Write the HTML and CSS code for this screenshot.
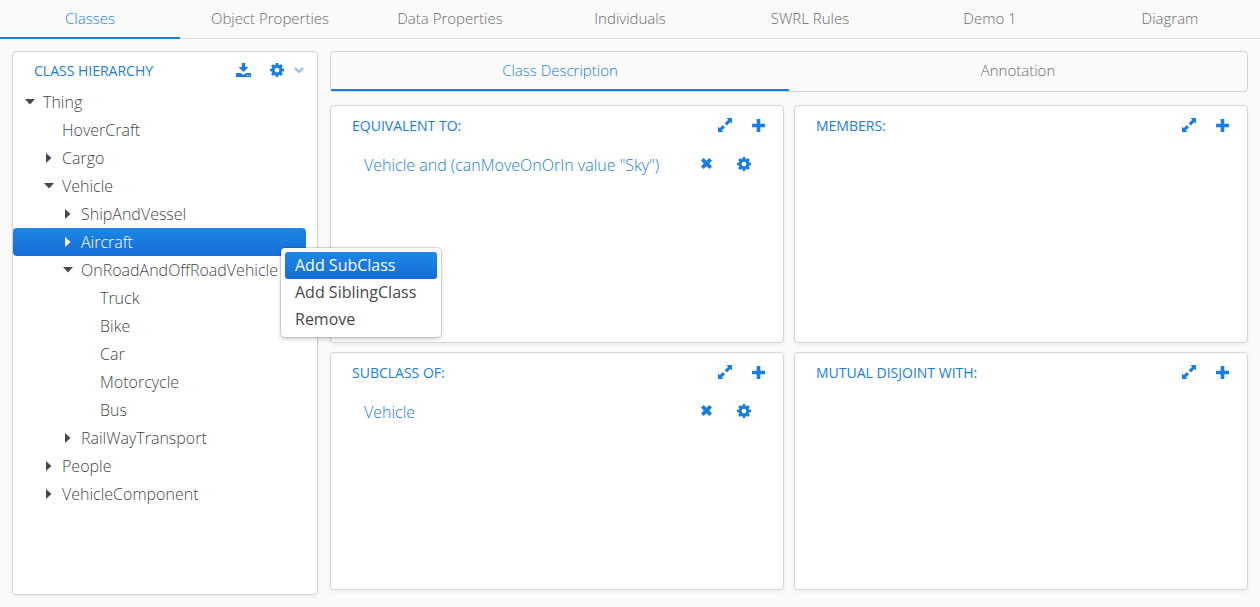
FILE: index.html
```html
<!DOCTYPE html>
<html lang="en">
<head>
<meta charset="utf-8">
<meta name="viewport" content="width=device-width, initial-scale=1">
<title>Ontology Editor</title>
<link rel="stylesheet" href="styles.css">
</head>
<body>
<svg class="sprite" aria-hidden="true">
  <symbol id="i-cog" viewBox="0 0 1536 1536"><path d="M1024 768q0-106-75-181t-181-75-181 75-75 181 75 181 181 75 181-75 75-181zm512-109v222q0 12-8 23t-20 13l-185 28q-19 54-39 91 35 50 107 138 10 12 10 25t-9 23q-27 37-99 108t-94 71q-12 0-26-9l-138-108q-44 23-91 38-16 136-29 186-7 28-36 28h-222q-14 0-24.500-8.500t-11.500-21.500l-28-184q-49-16-90-37l-141 107q-10 9-25 9-14 0-25-11-126-114-165-168-7-10-7-23 0-12 8-23 15-21 51-66.500t54-70.500q-27-50-41-99l-183-27q-13-2-21-12.500t-8-23.500v-222q0-12 8-23t19-13l186-28q14-46 39-92-40-57-107-138-10-12-10-24 0-10 9-23 26-36 98.500-107.500t94.500-71.500q13 0 26 10l138 107q44-23 91-38 16-136 29-186 7-28 36-28h222q14 0 24.500 8.500t11.500 21.500l28 184q49 16 90 37l142-107q9-9 24-9 13 0 25 10 129 119 165 170 7 8 7 22 0 12-8 23-15 21-51 66.500t-54 70.500q26 50 41 98l183 28q13 2 21 12.500t8 23.500z"/></symbol>
  <symbol id="i-download" viewBox="0 0 15 14"><path d="M5.800 0h3.400v4h3.300L7.500 9 2.500 4h3.300z"/><path fill-rule="evenodd" d="M0 10h4.700L7.500 12l2.800-2H15v4H0zM11 12v1h1v-1zM13 12v1h1v-1z"/></symbol>
  <symbol id="i-chevron" viewBox="0 0 10 6"><path d="M1 1l4 4 4-4" fill="none" stroke="currentColor" stroke-width="2"/></symbol>
  <symbol id="i-expand" viewBox="0 0 14 14"><path d="M8.500 0H14v5.500l-1.600-1.600-3.500 3.500-2.200-2.200 3.500-3.500zM0 8.500V14h5.500l-1.600-1.600 3.100-3.100-2.200-2.200-3.200 3.100z"/></symbol>
  <symbol id="i-plus" viewBox="0 0 13 13"><path d="M4.700 0h3.600v4.700H13v3.600H8.300V13H4.700V8.300H0V4.700h4.700z"/></symbol>
  <symbol id="i-close" viewBox="0 0 11 11"><path d="M2.600 0L5.500 2.700 8.400 0 11 2.600 8.300 5.500 11 8.400 8.400 11 5.500 8.300 2.600 11 0 8.400l2.700-2.900L0 2.600z"/></symbol>
  <symbol id="i-down" viewBox="0 0 10 10"><path d="M0 2h10L5 7.500z"/></symbol>
  <symbol id="i-right" viewBox="0 0 10 10"><path d="M2 0l5.500 5L2 10z"/></symbol>
</svg>

<nav class="tabs main-tabs" role="tablist" aria-label="Sections">
  <button class="tab active" role="tab" aria-selected="true">Classes</button>
  <button class="tab" role="tab">Object Properties</button>
  <button class="tab" role="tab">Data Properties</button>
  <button class="tab" role="tab">Individuals</button>
  <button class="tab" role="tab">SWRL Rules</button>
  <button class="tab" role="tab">Demo 1</button>
  <button class="tab" role="tab">Diagram</button>
</nav>

<main class="workspace">
  <section class="panel hierarchy">
    <header class="panel-head">
      <h2 class="title">CLASS HIERARCHY</h2>
      <div class="tools">
        <button class="icon-btn" aria-label="Download"><svg class="icon icon-download"><use href="#i-download"/></svg></button>
        <button class="icon-btn settings" aria-label="Settings"><svg class="icon icon-cog"><use href="#i-cog"/></svg><svg class="icon icon-chevron"><use href="#i-chevron"/></svg></button>
      </div>
    </header>
    <ul class="tree" role="tree">
      <li class="node level-1" role="treeitem" aria-expanded="true"><button class="node-btn"><svg class="arrow"><use href="#i-down"/></svg>Thing</button></li>
      <li class="node level-2" role="treeitem"><button class="node-btn"><span class="arrow"></span>HoverCraft</button></li>
      <li class="node level-2" role="treeitem" aria-expanded="false"><button class="node-btn"><svg class="arrow"><use href="#i-right"/></svg>Cargo</button></li>
      <li class="node level-2" role="treeitem" aria-expanded="true"><button class="node-btn"><svg class="arrow"><use href="#i-down"/></svg>Vehicle</button></li>
      <li class="node level-3" role="treeitem" aria-expanded="false"><button class="node-btn"><svg class="arrow"><use href="#i-right"/></svg>ShipAndVessel</button></li>
      <li class="node level-3 selected" role="treeitem" aria-expanded="false" aria-selected="true">
        <button class="node-btn"><svg class="arrow"><use href="#i-right"/></svg>Aircraft</button>
        <div class="menu" role="menu">
          <button class="menu-item active" role="menuitem">Add SubClass</button>
          <button class="menu-item" role="menuitem">Add SiblingClass</button>
          <button class="menu-item" role="menuitem">Remove</button>
        </div>
      </li>
      <li class="node level-3" role="treeitem" aria-expanded="true"><button class="node-btn"><svg class="arrow"><use href="#i-down"/></svg>OnRoadAndOffRoadVehicle</button></li>
      <li class="node level-4" role="treeitem"><button class="node-btn"><span class="arrow"></span>Truck</button></li>
      <li class="node level-4" role="treeitem"><button class="node-btn"><span class="arrow"></span>Bike</button></li>
      <li class="node level-4" role="treeitem"><button class="node-btn"><span class="arrow"></span>Car</button></li>
      <li class="node level-4" role="treeitem"><button class="node-btn"><span class="arrow"></span>Motorcycle</button></li>
      <li class="node level-4" role="treeitem"><button class="node-btn"><span class="arrow"></span>Bus</button></li>
      <li class="node level-3" role="treeitem" aria-expanded="false"><button class="node-btn"><svg class="arrow"><use href="#i-right"/></svg>RailWayTransport</button></li>
      <li class="node level-2" role="treeitem" aria-expanded="false"><button class="node-btn"><svg class="arrow"><use href="#i-right"/></svg>People</button></li>
      <li class="node level-2" role="treeitem" aria-expanded="false"><button class="node-btn"><svg class="arrow"><use href="#i-right"/></svg>VehicleComponent</button></li>
    </ul>
  </section>

  <div class="details">
    <div class="tabs detail-tabs" role="tablist" aria-label="Class details">
      <button class="tab active" role="tab" aria-selected="true">Class Description</button>
      <button class="tab" role="tab">Annotation</button>
    </div>
    <div class="cards">
      <section class="panel">
        <header class="card-head">
          <h2 class="title">EQUIVALENT TO:</h2>
          <div class="tools">
            <button class="icon-btn" aria-label="Expand"><svg class="icon icon-expand"><use href="#i-expand"/></svg></button>
            <button class="icon-btn" aria-label="Add"><svg class="icon icon-plus"><use href="#i-plus"/></svg></button>
          </div>
        </header>
        <div class="entry">
          <a class="entry-text" href="#">Vehicle and (canMoveOnOrIn value "Sky")</a>
          <div class="entry-tools">
            <button class="icon-btn" aria-label="Delete"><svg class="icon icon-close"><use href="#i-close"/></svg></button>
            <button class="icon-btn" aria-label="Edit"><svg class="icon icon-cog"><use href="#i-cog"/></svg></button>
          </div>
        </div>
      </section>
      <section class="panel">
        <header class="card-head">
          <h2 class="title">MEMBERS:</h2>
          <div class="tools">
            <button class="icon-btn" aria-label="Expand"><svg class="icon icon-expand"><use href="#i-expand"/></svg></button>
            <button class="icon-btn" aria-label="Add"><svg class="icon icon-plus"><use href="#i-plus"/></svg></button>
          </div>
        </header>
      </section>
      <section class="panel">
        <header class="card-head">
          <h2 class="title">SUBCLASS OF:</h2>
          <div class="tools">
            <button class="icon-btn" aria-label="Expand"><svg class="icon icon-expand"><use href="#i-expand"/></svg></button>
            <button class="icon-btn" aria-label="Add"><svg class="icon icon-plus"><use href="#i-plus"/></svg></button>
          </div>
        </header>
        <div class="entry">
          <a class="entry-text" href="#">Vehicle</a>
          <div class="entry-tools">
            <button class="icon-btn" aria-label="Delete"><svg class="icon icon-close"><use href="#i-close"/></svg></button>
            <button class="icon-btn" aria-label="Edit"><svg class="icon icon-cog"><use href="#i-cog"/></svg></button>
          </div>
        </div>
      </section>
      <section class="panel">
        <header class="card-head">
          <h2 class="title">MUTUAL DISJOINT WITH:</h2>
          <div class="tools">
            <button class="icon-btn" aria-label="Expand"><svg class="icon icon-expand"><use href="#i-expand"/></svg></button>
            <button class="icon-btn" aria-label="Add"><svg class="icon icon-plus"><use href="#i-plus"/></svg></button>
          </div>
        </header>
      </section>
    </div>
  </div>
</main>
</body>
</html>
```
FILE: styles.css
```css
* { box-sizing: border-box; }

body {
  margin: 0;
  min-height: 100vh;
  display: flex;
  flex-direction: column;
  background: #fafafa;
  color: #474747;
  font: 300 16px/28px "Open Sans", sans-serif;
}

button {
  margin: 0;
  padding: 0;
  border: 0;
  background: none;
  color: inherit;
  font: inherit;
  cursor: pointer;
}

.sprite { display: none; }

.tabs { display: flex; }

.tab {
  flex: 1;
  font-size: 15px;
  line-height: 20px;
  color: #6b6b6b;
  border-bottom: 2px solid transparent;
}

.tab.active {
  color: #197de1;
  border-bottom-color: #197de1;
}

.main-tabs { box-shadow: inset 0 -1px #dcdcdc; }

.main-tabs .tab { padding: 8px 0 9px; }

.workspace {
  flex: 1;
  display: grid;
  grid-template-columns: 1fr 3fr;
  gap: 12px;
  padding: 12px;
}

.panel {
  min-width: 0;
  background: #fff;
  border: 1px solid #d4d4d4;
  border-radius: 4px;
  box-shadow: 0 2px 4px rgba(0, 0, 0, 0.05);
}

.title {
  margin: 0;
  font-size: 14px;
  line-height: 20px;
  font-weight: 400;
  color: #197de1;
}

.panel-head,
.card-head {
  display: flex;
  justify-content: space-between;
  padding: 9px 13px 7px 21px;
}

.card-head { padding: 10px 18px 15px 21px; }

.tools {
  display: flex;
  align-items: center;
  gap: 19px;
  padding-bottom: 2px;
}

.card-head .tools { gap: 20px; }

.icon-btn {
  display: flex;
  align-items: center;
  color: #197de1;
}

.settings { gap: 10px; }

.icon {
  display: block;
  fill: currentColor;
}

.icon-cog,
.icon-expand { width: 14px; height: 14px; }
.icon-download { width: 15px; height: 14px; }
.icon-chevron { width: 10px; height: 6px; opacity: 0.5; }
.icon-plus { width: 13px; height: 13px; }
.icon-close { width: 11px; height: 11px; }

.tree {
  margin: 0;
  padding: 0 11px 0 0;
  list-style: none;
}

.node {
  position: relative;
  border-radius: 4px;
}

.node-btn {
  display: flex;
  align-items: center;
  gap: 8px;
  width: 100%;
  white-space: nowrap;
}

.level-1 .node-btn { padding-left: 12px; }
.level-2 .node-btn { padding-left: 31px; }
.level-3 .node-btn { padding-left: 50px; }
.level-4 .node-btn { padding-left: 69px; }

.arrow {
  flex: none;
  width: 10px;
  height: 10px;
  fill: currentColor;
}

.node.selected,
.menu-item.active {
  background: linear-gradient(#1c87e5, #166dd6);
  color: #fff;
}

.menu {
  position: absolute;
  z-index: 1;
  left: 268px;
  top: 20px;
  display: flex;
  flex-direction: column;
  padding: 4px;
  background: #fff;
  color: #474747;
  border-radius: 4px;
  box-shadow: 0 0 0 1px rgba(0, 0, 0, 0.12), 0 2px 5px rgba(0, 0, 0, 0.2);
}

.menu-item {
  padding: 0 21px 0 10px;
  border-radius: 3px;
  font-weight: 400;
  line-height: 27px;
  text-align: left;
  white-space: nowrap;
}

.details {
  display: flex;
  flex-direction: column;
  gap: 13px;
  min-width: 0;
  padding-bottom: 5px;
}

.detail-tabs {
  border: 1px solid #d4d4d4;
  border-radius: 4px;
}

.detail-tabs .tab { padding: 8px 0 9px; }

.cards {
  flex: 1;
  display: grid;
  grid-template: 1fr 1fr / 1fr 1fr;
  gap: 9px 10px;
}

.entry {
  display: flex;
  align-items: center;
  justify-content: space-between;
  padding: 0 32px 0 33px;
}

.entry-text {
  color: #197de1;
  text-decoration: none;
}

.entry-tools {
  display: flex;
  gap: 25px;
  padding-bottom: 3px;
}
```
